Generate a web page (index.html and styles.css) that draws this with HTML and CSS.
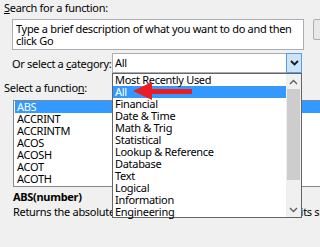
FILE: index.html
```html
<!DOCTYPE html>
<html lang="en">
<head>
    <meta charset="UTF-8">
    <title>Insert Function</title>
    <link rel="stylesheet" href="styles.css">
</head>
<body>
    <div class="dialog">
        <div class="label first-label"><u>S</u>earch for a function:</div>
        <div class="search-row">
            <div class="search-box">Type a brief description of what you want to do and then click Go</div>
            <button class="go-button">Go</button>
        </div>
        <div class="category-row">
            <span class="category-label">Or select a <u>c</u>ategory:</span>
            <div class="combo">
                <span class="combo-value">All</span>
                <span class="combo-button">
                    <svg width="9" height="6" viewBox="0 0 9 6"><path d="M1 1 L4.5 4.5 L8 1" fill="none" stroke="#1a1a1a" stroke-width="1.8"/></svg>
                </span>
            </div>
        </div>
        <div class="label">Select a functio<u>n</u>:</div>
        <ul class="function-list">
            <li class="selected">ABS</li>
            <li>ACCRINT</li>
            <li>ACCRINTM</li>
            <li>ACOS</li>
            <li>ACOSH</li>
            <li>ACOT</li>
            <li>ACOTH</li>
        </ul>
        <div class="signature">ABS(number)</div>
        <div class="description">Returns the absolute value of a number, a number without its sign.</div>

        <div class="dropdown">
            <ul class="dropdown-items">
                <li>Most Recently Used</li>
                <li class="selected">All</li>
                <li>Financial</li>
                <li>Date &amp; Time</li>
                <li>Math &amp; Trig</li>
                <li>Statistical</li>
                <li>Lookup &amp; Reference</li>
                <li>Database</li>
                <li>Text</li>
                <li>Logical</li>
                <li>Information</li>
                <li>Engineering</li>
            </ul>
            <div class="scrollbar">
                <span class="scroll-arrow">
                    <svg width="9" height="6" viewBox="0 0 9 6"><path d="M1 5 L4.5 1.5 L8 5" fill="none" stroke="#606060" stroke-width="1.4"/></svg>
                </span>
                <span class="scroll-thumb"></span>
                <span class="scroll-track"></span>
                <span class="scroll-arrow">
                    <svg width="9" height="6" viewBox="0 0 9 6"><path d="M1 1 L4.5 4.5 L8 1" fill="none" stroke="#606060" stroke-width="1.4"/></svg>
                </span>
            </div>
        </div>

        <svg class="red-arrow" width="64" height="24" viewBox="0 0 64 24">
            <polygon points="3,12 22,3 22,10 62,10 62,15 22,15 22,21" fill="#ec1c24"/>
        </svg>
    </div>
</body>
</html>
```

FILE: styles.css
```css
body {
    margin: 0;
    background-color: #F0F0F0;
    font-family: 'Noto Sans', 'Open Sans', sans-serif;
    font-size: 11px;
    letter-spacing: -0.3px;
    color: #000;
    overflow: hidden;
}
.dialog {
    position: relative;
    width: 420px;
    height: 247px;
}
.label {
    line-height: 14px;
    height: 14px;
    padding-left: 4px;
    margin-top: 8px;
    white-space: nowrap;
}
.first-label {
    margin-top: 1px;
}
.search-row {
    display: flex;
    margin-top: 4px;
    margin-left: 12px;
}
.search-box {
    flex-shrink: 0;
    width: 286px;
    height: 26px;
    padding: 3px 1px 0 3px;
    line-height: 12px;
    background-color: #fff;
    border: 1px solid #ABADB3;
    white-space: normal;
}
.go-button {
    flex-shrink: 0;
    margin-left: 9px;
    width: 75px;
    height: 21px;
    background-color: #E8E8E8;
    border: 1px solid #ADADAD;
    border-radius: 2px;
    font: inherit;
}
.category-row {
    display: flex;
    align-items: center;
    margin-top: 3px;
    margin-left: 12px;
    height: 20px;
}
.category-label {
    flex-shrink: 0;
    width: 100px;
    white-space: nowrap;
}
.combo {
    flex-shrink: 0;
    display: flex;
    width: 188px;
    height: 18px;
    border: 1px solid #ABADB3;
    background-color: #fff;
}
.combo-value {
    flex: 1;
    line-height: 18px;
    padding-left: 2px;
}
.combo-button {
    width: 14px;
    height: 18px;
    margin: -1px -1px -1px 0;
    border: 1px solid #569DE5;
    background-color: #CCE4F7;
    display: flex;
    align-items: center;
    justify-content: center;
}
.function-list {
    list-style: none;
    margin: 5px 0 0 13px;
    padding: 0;
    width: 360px;
    height: 85px;
    border: 1px solid #828790;
    background-color: #fff;
}
.function-list li {
    height: 12px;
    line-height: 12px;
    padding-left: 2px;
    margin-left: 1px;
}
.selected {
    background-color: #3399FF;
    color: #fff;
}
.signature {
    margin-top: 3px;
    padding-left: 13px;
    line-height: 14px;
    font-weight: bold;
}
.description {
    margin-top: 1px;
    padding-left: 13px;
    line-height: 14px;
    white-space: nowrap;
}
.dropdown {
    position: absolute;
    left: 112px;
    top: 72px;
    width: 188px;
    height: 143px;
    border: 1px solid #646464;
    background-color: #fff;
    display: flex;
}
.dropdown-items {
    list-style: none;
    margin: 0;
    padding: 0;
    flex: 1;
}
.dropdown-items li {
    height: 12px;
    line-height: 12px;
    padding-left: 2px;
    white-space: nowrap;
}
.scrollbar {
    width: 15px;
    display: flex;
    flex-direction: column;
    background-color: #F0F0F0;
}
.scroll-arrow {
    height: 15px;
    display: flex;
    align-items: center;
    justify-content: center;
}
.scroll-thumb {
    height: 91px;
    margin: 0 1px;
    background-color: #CDCDCD;
}
.scroll-track {
    flex: 1;
}
.red-arrow {
    position: absolute;
    left: 130px;
    top: 78px;
}
```
